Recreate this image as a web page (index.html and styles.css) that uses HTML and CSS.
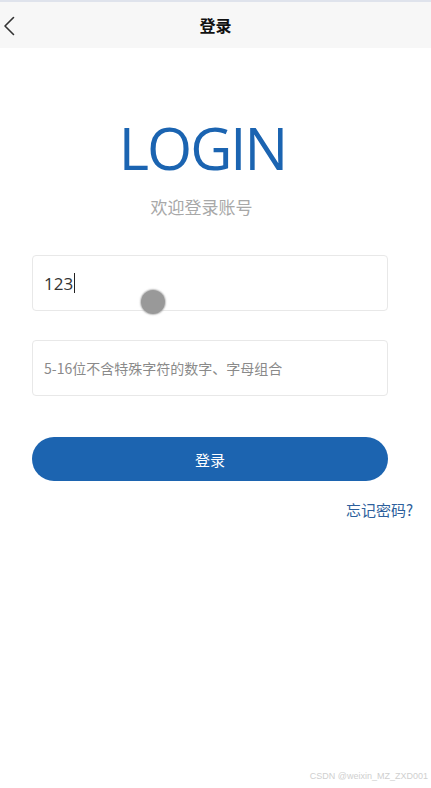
FILE: index.html
```html
<!DOCTYPE html>
<html lang="zh">
<head>
<meta charset="utf-8">
<title>登录</title>
<link rel="stylesheet" href="styles.css">
</head>
<body>
<div class="page">
  <header class="navbar">
    <span class="back">
      <svg width="14" height="20" viewBox="0 0 14 20"><path d="M11.5 1.5 L3 10 L11.5 18.5" fill="none" stroke="#333" stroke-width="1.6" stroke-linecap="round" stroke-linejoin="round"/></svg>
    </span>
    <h1 class="nav-title">登录</h1>
  </header>
  <main class="content">
    <div class="brand">
      <div class="logo">LOGIN</div>
      <div class="welcome">欢迎登录账号</div>
    </div>
    <div class="form">
      <div class="field field-active">
        <span class="value">123</span><span class="caret"></span>
        <span class="touch"></span>
      </div>
      <div class="field">
        <span class="placeholder">5-16位不含特殊字符的数字、字母组合</span>
      </div>
      <button class="submit">登录</button>
    </div>
    <div class="forgot-row"><a class="forgot">忘记密码?</a></div>
  </main>
  <div class="watermark">CSDN @weixin_MZ_ZXD001</div>
</div>
</body>
</html>
```
FILE: styles.css
```css
html, body {
  margin: 0;
  padding: 0;
  background: #fff;
}
body {
  font-family: "Noto Sans CJK SC", "Open Sans", sans-serif;
}
.page {
  width: 431px;
  height: 788px;
  position: relative;
  border-top: 2px solid #dfe3ec;
  box-sizing: border-box;
  overflow: hidden;
}
.navbar {
  height: 46px;
  background: #f7f7f7;
  display: flex;
  align-items: center;
  justify-content: center;
  position: relative;
}
.back {
  position: absolute;
  left: 2px;
  top: 14px;
  display: flex;
}
.nav-title {
  margin: 0;
  font-size: 16px;
  font-weight: bold;
  color: #111;
  line-height: 1;
}
.content {
  padding: 0 32px;
  display: flex;
  flex-direction: column;
}
.brand {
  display: flex;
  flex-direction: column;
  align-items: center;
  padding-top: 68px;
  padding-right: 28px;
}
.logo {
  font-family: "Open Sans", sans-serif;
  font-size: 58px;
  line-height: 64px;
  height: 64px;
  color: #1b64b1;
  letter-spacing: -2px;
  margin-left: 2px;
}
.welcome {
  font-size: 17px;
  color: #a8a8a8;
  line-height: 24px;
  margin-top: 15px;
}
.form {
  display: flex;
  flex-direction: column;
  margin-top: 36px;
  gap: 29px;
  width: 356px;
}
.field {
  height: 56px;
  border: 1px solid #e8e8e8;
  border-radius: 4px;
  box-sizing: border-box;
  display: flex;
  align-items: center;
  padding-left: 11px;
  position: relative;
}
.value {
  font-family: "Open Sans", sans-serif;
  font-size: 17px;
  color: #333;
}
.caret {
  display: inline-block;
  width: 1px;
  height: 20px;
  background: #222;
  margin-left: 1px;
}
.touch {
  position: absolute;
  left: 108px;
  top: 34px;
  width: 24px;
  height: 24px;
  border-radius: 50%;
  background: #999;
  box-shadow: 0 0 1.5px 1px rgba(150,150,150,0.6);
}
.placeholder {
  font-size: 14px;
  color: #8a8a8a;
}
.submit {
  margin-top: 12px;
  height: 44px;
  border: none;
  border-radius: 22px;
  background: #1c64b0;
  color: #fff;
  font-family: "Noto Sans CJK SC", sans-serif;
  font-size: 15px;
  padding: 0;
}
.forgot-row {
  display: flex;
  justify-content: flex-end;
  margin-right: -14px;
  margin-top: 19px;
}
.forgot {
  font-size: 15px;
  color: #2d5f9c;
  line-height: 20px;
}
.watermark {
  position: absolute;
  right: 3px;
  bottom: 7px;
  font-family: "Liberation Sans", sans-serif;
  font-size: 9px;
  color: #cfcfcf;
}
```
